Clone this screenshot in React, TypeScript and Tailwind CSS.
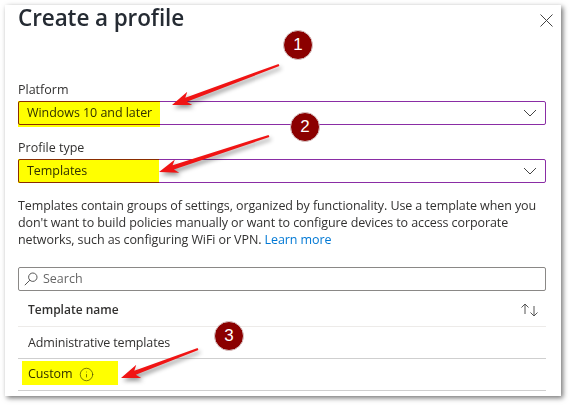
import { Info } from "lucide-react";

const Highlight = ({ className }: { className: string }) => (
  <div className={`absolute bg-[#ffff00] mix-blend-multiply ${className}`} />
);

const Chevron = () => (
  <svg width={14} height={8} viewBox="0 0 14 8" fill="none" stroke="#444" strokeWidth={1}>
    <path d="M1 1L7 7L13 1" />
  </svg>
);

const Select = ({ value, marker }: { value: string; marker: string }) => (
  <div className="relative h-6 flex items-center justify-between border border-[#8a2da5] rounded-[2px] pl-2 pr-2">
    <span className="text-[12.5px] text-[#323130] pt-[1px] tracking-[-0.05px]">{value}</span>
    <Chevron />
    <Highlight className={marker} />
  </div>
);

const Marker = ({ n, className }: { n: number; className: string }) => (
  <div
    className={`absolute w-[30px] h-[30px] rounded-full bg-[#8b0000] border border-[#d8c8c8] text-white text-[17px] flex items-center justify-center font-['Liberation_Sans'] ${className}`}
  >
    {n}
  </div>
);

// tapered arrow, narrow at the tail and with a wide head at the tip
const Arrow = ({ x1, y1, x2, y2 }: { x1: number; y1: number; x2: number; y2: number }) => {
  const len = Math.hypot(x2 - x1, y2 - y1);
  const ux = (x2 - x1) / len;
  const uy = (y2 - y1) / len;
  const px = -uy;
  const py = ux;
  const at = (back: number, side: number) =>
    `${(x2 - ux * back + px * side).toFixed(1)},${(y2 - uy * back + py * side).toFixed(1)}`;
  const points = [
    at(0, 0),
    at(19, 7),
    at(15, 2.2),
    at(len, 1.2),
    at(len, -1.2),
    at(15, -2.2),
    at(19, -7),
  ].join(" ");
  return <polygon points={points} fill="#f01414" />;
};

const Arrows = () => (
  <svg className="absolute left-0 top-0 drop-shadow-[2px_3px_2px_rgba(0,0,0,0.4)]" width={570} height={406}>
    <Arrow x1={279} y1={65} x2={172} y2={105} />
    <Arrow x1={269} y1={136} x2={159} y2={172} />
    <Arrow x1={198} y1={349} x2={121} y2={378} />
  </svg>
);

export default function App() {
  return (
    <div
      className="relative w-[570px] h-[406px] bg-white overflow-hidden text-[#323130]"
      style={{ fontFamily: '"Open Sans", "Noto Sans", sans-serif' }}
    >
      <div className="absolute left-[5px] top-[5px] w-[556px] h-[391px] bg-white shadow-[2px_2px_5px_rgba(0,0,0,0.55)]" />
      <div className="relative ml-[18px] mr-[24px] flex flex-col">
        <div className="flex items-start justify-between h-[48px]">
          <h1 className="text-[22.5px] leading-[36px] font-semibold tracking-[-0.1px] text-[#252b33]">Create a profile</h1>
          <svg className="mt-[14px] mr-[-7px]" width={13} height={13} viewBox="0 0 13 13" fill="none" stroke="#444" strokeWidth={1}>
            <path d="M0.5 0.5L12.5 12.500M12.500 0.5L0.5 12.500" />
          </svg>
        </div>
        <label className="mt-[33px] text-[12.5px] leading-[18px]">Platform</label>
        <div className="mt-[2px]">
          <Select value="Windows 10 and later" marker="left-[-1px] top-[-1px] w-[142px] h-[26px]" />
        </div>
        <label className="mt-[14px] text-[12.5px] leading-[18px]">Profile type</label>
        <div className="mt-[2px]">
          <Select value="Templates" marker="left-[-1px] top-[-1px] w-[141px] h-[24px]" />
        </div>
        <p className="mt-[14px] text-[12.5px] leading-[17px] tracking-[-0.09px]">
          Templates contain groups of settings, organized by functionality. Use a template when you
          <br />
          don't want to build policies manually or want to configure devices to access corporate
          <br />
          networks, such as configuring WiFi or VPN. <span className="text-[#0078d4]">Learn more</span>
        </p>
        <div className="mt-[19px] h-6 flex items-center border border-[#8a8886] rounded-[2px] pl-[5px] gap-[5px]">
          <svg width={14} height={14} viewBox="0 0 14 14" fill="none" stroke="#555" strokeWidth={1}>
            <circle cx={8.800} cy={5.200} r={4.200} />
            <path d="M5.800 8.200L0.800 13.200" />
          </svg>
          <span className="text-[12.5px] text-[#666] pt-[1px]">Search</span>
        </div>
        <div className="h-[36px] flex items-center justify-between border-b border-[#edebe9] pl-[10px] pr-[8px] pt-[2px]">
          <span className="text-[12px] font-semibold">Template name</span>
          <svg width={17} height={14} viewBox="0 0 17 14" fill="none" stroke="#555" strokeWidth={1}>
            <path d="M4 11V1M0.500 4.500L4 1L7.500 4.500M13 3V13M9.500 9.500L13 13L16.500 9.500" />
          </svg>
        </div>
        <div className="h-[32px] flex items-center border-b border-[#cfcfcf] pl-[10px] pt-[1px]">
          <span className="text-[12.5px] tracking-[-0.16px]">Administrative templates</span>
        </div>
        <div className="relative h-[32px] flex items-center border-b border-[#cfcfcf] pl-[10px]">
          <span className="text-[12.5px] tracking-[-0.1px]">Custom</span>
          <Info className="w-[15px] h-[15px] ml-[7px] text-[#444]" strokeWidth={1.1} />
          <Highlight className="left-[4px] top-[2px] w-[96px] h-[24px]" />
        </div>
      </div>
      <Arrows />
      <Marker n={1} className="left-[283px] top-[30px]" />
      <Marker n={2} className="left-[290px] top-[112px]" />
      <Marker n={3} className="left-[214px] top-[321px]" />
    </div>
  );
}
